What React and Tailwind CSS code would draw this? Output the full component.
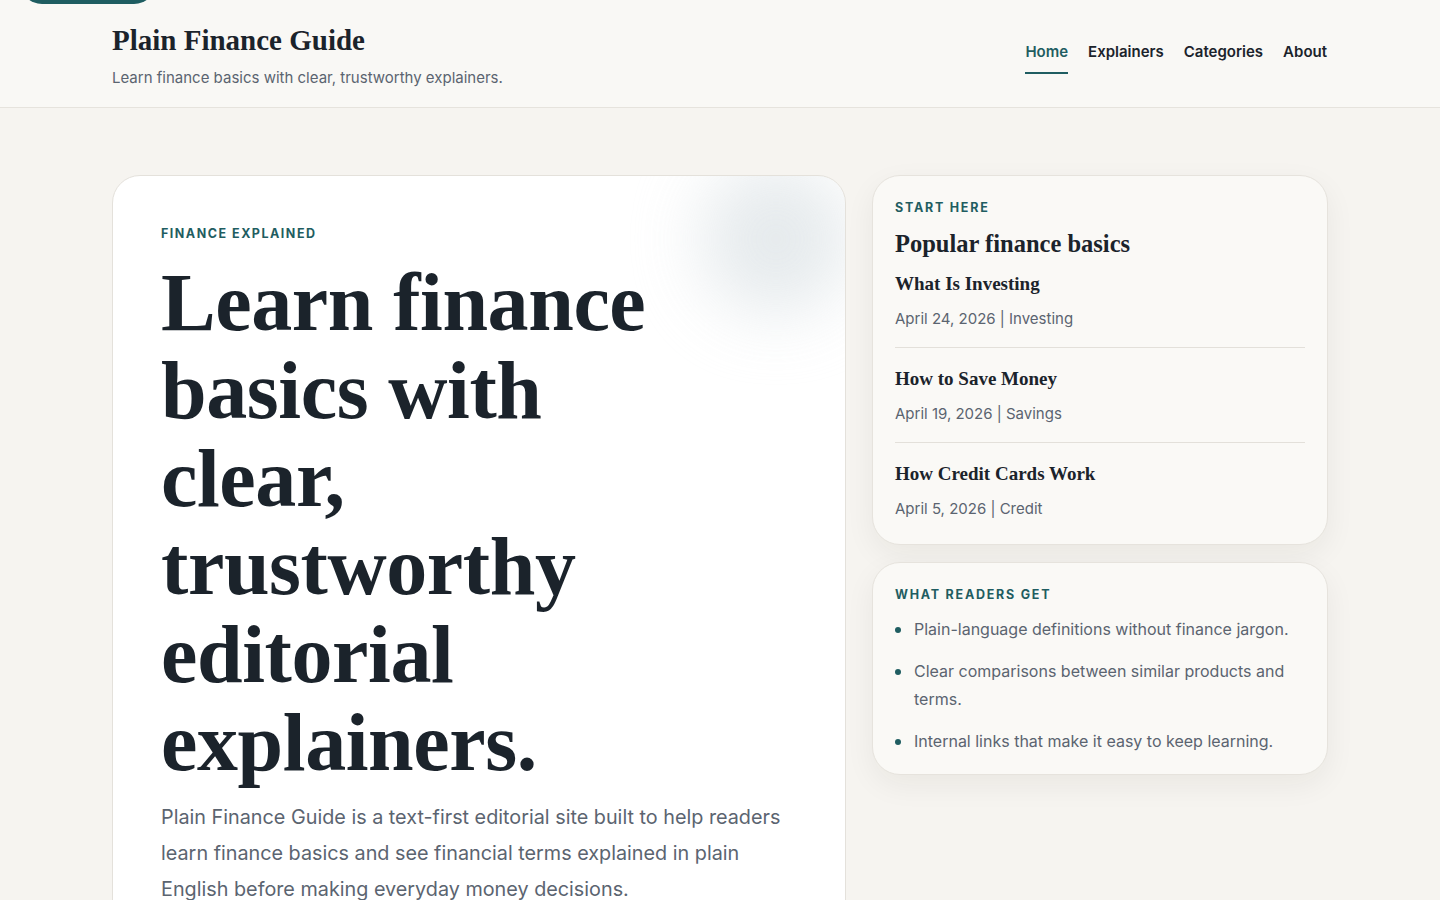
import React from "react";

const serif = "font-['Liberation_Serif','Times_New_Roman',serif]";

const popular = [
    { title: "What Is Investing", date: "April 24, 2026", category: "Investing" },
    { title: "How to Save Money", date: "April 19, 2026", category: "Savings" },
    { title: "How Credit Cards Work", date: "April 5, 2026", category: "Credit" },
];

const benefits = [
    "Plain-language definitions without finance jargon.",
    "Clear comparisons between similar products and terms.",
    "Internal links that make it easy to keep learning.",
];

const navLinks = ["Home", "Explainers", "Categories", "About"];

const App = () => {
    return (
        <div className="min-h-screen bg-[#f6f4f0] font-['Inter','Noto_Sans',sans-serif] text-[#1b232b]">
            {/* skip link peeking from the top edge */}
            <a
                href="#main"
                className="absolute left-[20px] top-[-40px] h-[44px] w-[136px] rounded-full bg-[#1f5d61]"
            >
                <span className="sr-only">Skip to content</span>
            </a>

            {/* Site header */}
            <header className="border-b border-[#e6e3dd] bg-[#f9f8f5]">
                <div className="mx-auto flex w-[1216px] items-start justify-between pb-[20px] pt-[22px]">
                    <div>
                        <h1 className={`${serif} text-[29px] font-bold leading-[36px] text-[#1b232b]`}>
                            Plain Finance Guide
                        </h1>
                        <p className="mt-[11px] text-[15px] leading-[18px] text-[#5b6470]">
                            Learn finance basics with clear, trustworthy explainers.
                        </p>
                    </div>
                    <nav className="mt-[19px] flex gap-[20px] pr-px">
                        {navLinks.map((link) => (
                            <a
                                key={link}
                                href="#"
                                className={`border-b-2 pb-[9px] text-[15px] font-semibold leading-[22px] ${
                                    link === "Home"
                                        ? "border-[#1f5d61] text-[#1f5d61]"
                                        : "border-transparent text-[#1b232b]"
                                }`}
                            >
                                {link}
                            </a>
                        ))}
                    </nav>
                </div>
            </header>

            <main id="main" className="mx-auto grid w-[1216px] grid-cols-[734px_456px] items-start gap-[26px] pt-[67px]">
                {/* Hero card */}
                <section className="relative overflow-hidden rounded-[28px] border border-[#e4e1db] bg-white px-[48px] pb-[60px] pt-[50px]">
                    <div className="pointer-events-none absolute right-[-6px] top-[-12px] h-[150px] w-[150px] rounded-full bg-[#dfe5e8] opacity-80 blur-[34px]" />
                    <p className="relative text-[12.5px] font-bold uppercase leading-[16px] tracking-[0.12em] text-[#1f5d61]">
                        Finance Explained
                    </p>
                    <h2
                        className={`${serif} relative mt-[17px] max-w-[540px] text-[82px] font-bold leading-[88px] tracking-[-0.005em] text-[#1b232b]`}
                    >
                        Learn finance basics with clear, trustworthy editorial explainers.
                    </h2>
                    <p className="relative mt-[12px] max-w-[630px] text-[19.8px] leading-[36px] text-[#5b6470]">
                        Plain Finance Guide is a text-first editorial site built to help readers learn finance basics and
                        see financial terms explained in plain English before making everyday money decisions.
                    </p>
                </section>

                {/* Sidebar */}
                <aside className="flex flex-col gap-[17px]">
                    <div className="rounded-[28px] border border-[#e6e3dd] bg-[#faf9f6] px-[22px] pb-[25px] pt-[24px] shadow-[0_10px_30px_rgba(40,35,25,0.06)]">
                        <p className="text-[12.5px] font-bold uppercase leading-[16px] tracking-[0.14em] text-[#1f5d61]">
                            Start Here
                        </p>
                        <h3 className={`${serif} mt-[13px] text-[24.5px] font-bold leading-[30px]`}>
                            Popular finance basics
                        </h3>
                        <ul>
                            {popular.map((item, i) => (
                                <li
                                    key={item.title}
                                    className={i > 0 ? "border-t border-[#e3e0da] pt-[18px]" : "pt-[12px]"}
                                >
                                    <a href="#" className={`${serif} block text-[19px] font-bold leading-[26px]`}>
                                        {item.title}
                                    </a>
                                    <p className={`mt-[12px] text-[15px] leading-[20px] text-[#5b6470] ${i < 2 ? "pb-[18px]" : ""}`}>
                                        {item.date} | {item.category}
                                    </p>
                                </li>
                            ))}
                        </ul>
                    </div>

                    <div className="rounded-[28px] border border-[#e6e3dd] bg-[#faf9f6] px-[22px] pb-[19px] pt-[24px] shadow-[0_10px_30px_rgba(40,35,25,0.06)]">
                        <p className="text-[12.5px] font-bold uppercase leading-[16px] tracking-[0.14em] text-[#1f5d61]">
                            What Readers Get
                        </p>
                        <ul className="mt-[12px] flex flex-col gap-[14px]">
                            {benefits.map((text) => (
                                <li key={text} className="flex gap-[13px] text-[16px] leading-[28px] text-[#5b6470]">
                                    <span className="mt-[12px] h-[6px] w-[6px] shrink-0 rounded-full bg-[#1f5d61]" />
                                    <span>{text}</span>
                                </li>
                            ))}
                        </ul>
                    </div>
                </aside>
            </main>
        </div>
    );
};

export default App;
